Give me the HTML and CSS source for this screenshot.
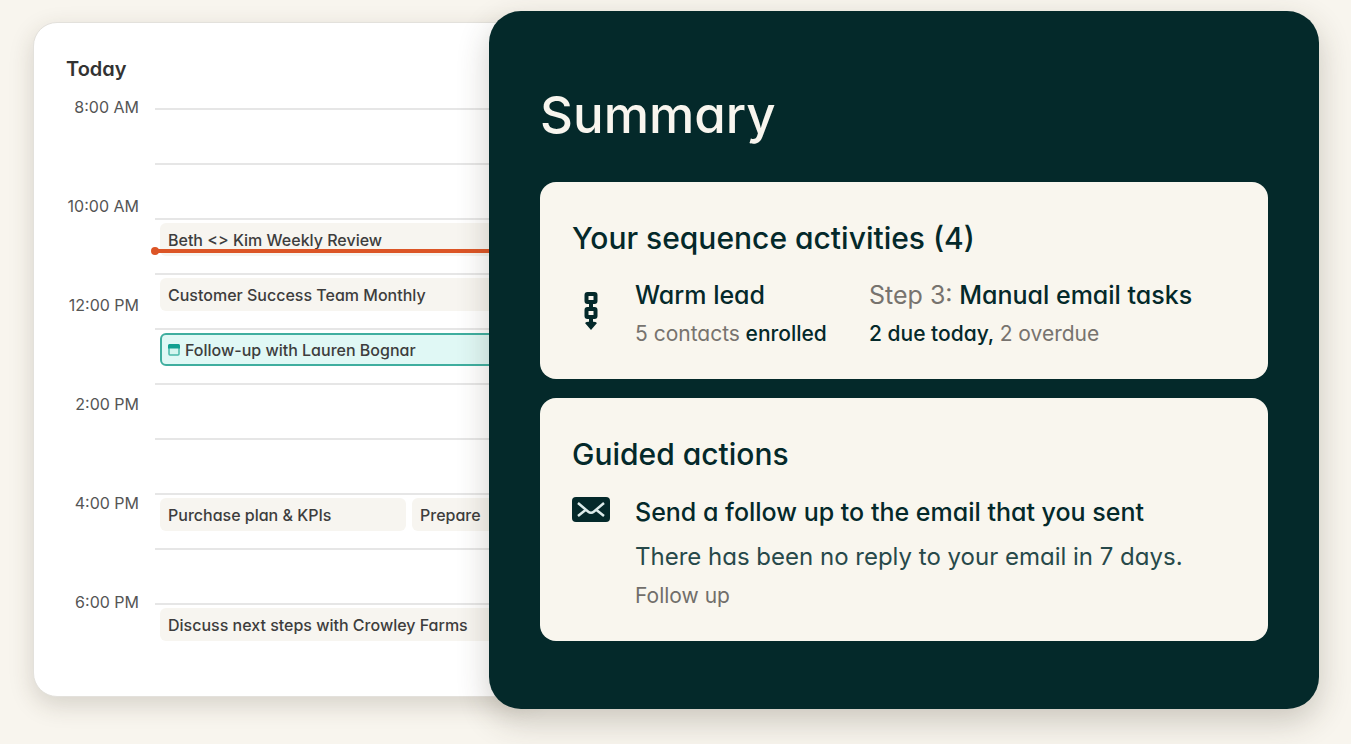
FILE: index.html
```html
<!DOCTYPE html>
<html lang="en">
<head>
<meta charset="utf-8">
<meta name="viewport" content="width=device-width, initial-scale=1">
<title>Summary</title>
<link rel="stylesheet" href="styles.css">
</head>
<body>
<main class="board">
  <section class="calendar" aria-labelledby="today">
    <h2 class="calendar-title" id="today">Today</h2>
    <div class="schedule">
      <div class="hours">
        <time class="hour">8:00 AM</time>
        <time class="hour">10:00 AM</time>
        <time class="hour">12:00 PM</time>
        <time class="hour">2:00 PM</time>
        <time class="hour">4:00 PM</time>
        <time class="hour">6:00 PM</time>
      </div>
      <div class="slots">
        <div class="slot"></div>
        <div class="slot"></div>
        <div class="slot slot-now"><div class="event">Beth &lt;&gt; Kim Weekly Review</div><span class="now"></span></div>
        <div class="slot"><div class="event">Customer Success Team Monthly</div></div>
        <div class="slot"><div class="event event-active">
          <svg class="event-icon" viewBox="0 0 12 12" aria-hidden="true"><rect x="1" y="1" width="10" height="10" rx="1" fill="#d4f5ef" stroke="#49b8a9" stroke-width="1.5"/><path d="M0 1.5Q0 0 1.500 0H10.500Q12 0 12 1.500V4.500H0z" fill="#12a091"/></svg>
          Follow-up with Lauren Bognar</div></div>
        <div class="slot"></div>
        <div class="slot"></div>
        <div class="slot"><div class="event event-half">Purchase plan &amp; KPIs</div><div class="event">Prepare</div></div>
        <div class="slot"></div>
        <div class="slot"><div class="event">Discuss next steps with Crowley Farms</div></div>
      </div>
    </div>
  </section>

  <section class="summary" aria-labelledby="summary">
    <h1 class="summary-title" id="summary">Summary</h1>
    <div class="cards">
      <article class="card">
        <h2 class="card-title">Your sequence activities (4)</h2>
        <div class="row">
          <svg class="icon icon-sequence" viewBox="0 0 38 38" aria-hidden="true"><g fill="none" stroke="#04292a" stroke-width="4"><rect x="14.500" y="2" width="9" height="8" rx="1"/><rect x="14.500" y="17" width="9" height="8" rx="1"/><path d="M19 10v7M19 25v7"/></g><path d="M13 31q2-2 6-1 4-1 6 1l-6 7z" fill="#04292a"/></svg>
          <div class="sequence">
            <div class="pair">
              <h3 class="item-title">Warm lead</h3>
              <p class="detail"><span class="muted">5 contacts</span> enrolled</p>
            </div>
            <div class="pair">
              <h3 class="item-title"><span class="muted">Step 3:</span> Manual email tasks</h3>
              <p class="detail">2 due today, <span class="muted">2 overdue</span></p>
            </div>
          </div>
        </div>
      </article>
      <article class="card">
        <h2 class="card-title">Guided actions</h2>
        <div class="row">
          <svg class="icon" viewBox="0 0 38 38" aria-hidden="true"><rect y="6" width="38" height="25" rx="4" fill="#04292a"/><path d="M6 12l10 8.500q3 2.500 6 0l10-8.500M6 25l7.500-6M32 25l-7.500-6" fill="none" stroke="#dcebea" stroke-width="2.500"/></svg>
          <div class="action">
            <h3 class="action-title">Send a follow up to the email that you sent</h3>
            <p class="action-text">There has been no reply to your email in 7 days.</p>
            <a class="action-link" href="#follow-up">Follow up</a>
          </div>
        </div>
      </article>
    </div>
  </section>
</main>
</body>
</html>
```
FILE: styles.css
```css
* { box-sizing: border-box; }

body {
  margin: 0;
  background: #f8f5ee;
  color: #04292a;
  font-family: Inter, "Open Sans", sans-serif;
  font-feature-settings: "cv11";
}

h1, h2, h3, p { margin: 0; }

.board {
  display: grid;
  grid-template-columns: minmax(0, 456fr) minmax(0, 830fr);
  align-items: start;
  padding: 11px 32px 35px 33px;
}

/* The calendar runs on under the summary panel. */
.calendar {
  margin: 11px -48px 0 0;
  padding: 32px 0 38px 32px;
  min-width: 0;
  overflow: hidden;
  background: #fff;
  border: 1px solid #e3e1dc;
  border-radius: 24px;
  box-shadow: 0 8px 24px rgb(60 50 35 / 18%);
}

.calendar-title {
  font-size: 20px;
  line-height: 28px;
  font-weight: 600;
  color: #333;
}

.schedule {
  display: grid;
  grid-template-columns: 73px minmax(0, 1fr);
  column-gap: 16px;
  padding-top: 10px;
}

.hour {
  display: block;
  height: 99px;
  padding-top: 2px;
  font-size: 16px;
  line-height: 24px;
  text-align: right;
  white-space: nowrap;
  color: #555;
}

.hour:last-child { height: auto; }

.slots { padding-top: 15px; }

.slot {
  display: flex;
  gap: 6px;
  height: 55px;
  padding: 3px 0 0 5px;
  border-top: 2px solid #e6e6e6;
}

.slot-now { position: relative; }

.event {
  display: flex;
  flex: 1;
  align-items: center;
  gap: 5px;
  height: 33px;
  padding: 0 8px;
  border-radius: 6px;
  background: #f7f5f0;
  font-size: 16px;
  font-weight: 500;
  white-space: nowrap;
  color: #3d3d3d;
}

.event-half { flex: 0 0 246px; }

.event-active {
  padding: 0 6px;
  border: 2px solid #3fae9f;
  background: #e0f8f5;
}

.event-icon { width: 12px; height: 12px; }

.now {
  position: absolute;
  top: 29px;
  left: 0;
  right: 0;
  height: 4px;
  background: #dc5526;
}

.now::before {
  content: "";
  position: absolute;
  top: -2px;
  left: -4px;
  width: 8px;
  height: 8px;
  border-radius: 50%;
  background: #dc5526;
}

.summary {
  position: relative;
  padding: 72px 51px 68px;
  background: #04292a;
  border-radius: 32px;
  box-shadow: 0 12px 32px rgb(60 50 35 / 24%);
}

.summary-title {
  margin-bottom: 35px;
  font-size: 51px;
  line-height: 64px;
  font-weight: 500;
  color: #f8f5ee;
}

.cards { display: grid; gap: 19px; }

.card {
  padding: 36px 32px 28px;
  border-radius: 16px;
  background: #f9f6ee;
}

.card-title {
  font-size: 30px;
  line-height: 40px;
  font-weight: 500;
}

.row {
  display: grid;
  grid-template-columns: 38px minmax(0, 1fr);
  column-gap: 25px;
  padding-top: 15px;
}

.icon { width: 38px; height: 38px; margin-top: 2px; }

.icon-sequence { margin-top: 19px; }

.sequence {
  display: grid;
  grid-template-columns: minmax(0, 234fr) minmax(0, 367fr);
}

.pair { white-space: nowrap; }

.item-title {
  font-size: 25px;
  line-height: 44px;
  font-weight: 500;
}

.detail {
  font-size: 21px;
  line-height: 34px;
  font-weight: 500;
}

.muted { color: #77736e; font-weight: 400; }

.action-title {
  font-size: 25px;
  line-height: 46px;
  font-weight: 500;
}

.action-text {
  font-size: 24px;
  line-height: 44px;
  color: #27494a;
}

.action-link {
  display: block;
  width: fit-content;
  font-size: 21px;
  line-height: 34px;
  text-decoration: none;
  color: #716e6a;
}
```
